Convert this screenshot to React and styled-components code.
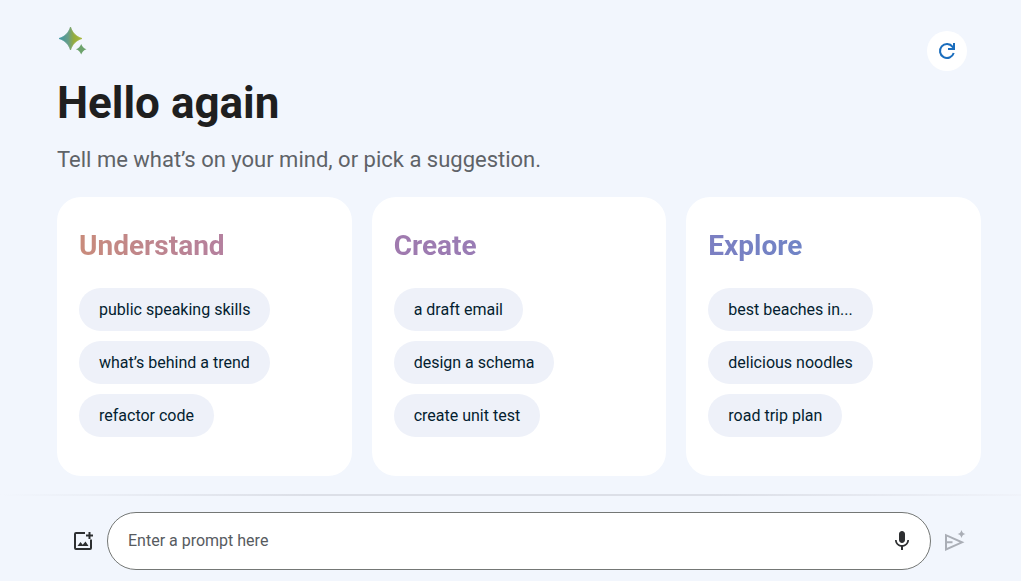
import React from 'react';
import styled, { createGlobalStyle } from 'styled-components';
import { MdMic } from 'react-icons/md';

const GlobalStyle = createGlobalStyle`
  * {
    box-sizing: border-box;
  }

  body {
    margin: 0;
    background: #f2f6fd;
    font-family: Roboto, "Liberation Sans", sans-serif;
  }
`;

const Page = styled.div`
  min-height: 100vh;
  display: flex;
  flex-direction: column;
`;

const Main = styled.main`
  flex: 1;
  padding: 27px 40px 18px 57px;
`;

const Header = styled.header`
  display: flex;
  justify-content: space-between;
  align-items: flex-start;
  padding: 0 14px 0 2px;
`;

const RefreshButton = styled.button`
  display: flex;
  align-items: center;
  justify-content: center;
  width: 40px;
  height: 40px;
  margin-top: 4px;
  padding: 0;
  border: none;
  border-radius: 50%;
  background: #ffffff;
  color: #1a6dbd;
  cursor: pointer;
`;

const Title = styled.h1`
  margin: 6px 0 0;
  font-weight: 700;
  font-size: 44px;
  line-height: 52px;
  color: #1f1f1f;
`;

const Subtitle = styled.p`
  margin: 17px 0 0;
  font-size: 22px;
  line-height: 28px;
  color: #5f6368;
`;

const Cards = styled.div`
  display: grid;
  grid-template-columns: repeat(3, 1fr);
  gap: 20px;
  margin-top: 23px;
`;

const Card = styled.section`
  padding: 33px 22px 39px;
  border-radius: 24px;
  background: #ffffff;
`;

const CardTitle = styled.h2`
  width: fit-content;
  margin: 0 0 26px;
  font-weight: 700;
  font-size: 28px;
  line-height: 32px;
  color: transparent;
  background: linear-gradient(
    90deg,
    ${({ $from }) => $from},
    ${({ $to }) => $to}
  );
  background-clip: text;
`;

const Chips = styled.div`
  display: flex;
  flex-direction: column;
  align-items: flex-start;
  gap: 10px;
`;

const Chip = styled.button`
  height: 43px;
  padding: 0 20px;
  border: none;
  border-radius: 22px;
  background: #eef1f9;
  color: #041e30;
  font-family: inherit;
  font-size: 16px;
  cursor: pointer;
`;

const Divider = styled.hr`
  width: 100%;
  height: 2px;
  margin: 0;
  border: none;
  background: linear-gradient(
    90deg,
    #f2f6fd 0%,
    #dcdfe7 30%,
    #dcdfe7 70%,
    #f0f3fa 100%
  );
`;

const PromptBar = styled.form`
  display: flex;
  align-items: center;
  gap: 12px;
  padding: 16px 54px 11px 71px;
`;

const IconButton = styled.button`
  display: flex;
  flex-shrink: 0;
  padding: 0;
  border: none;
  background: none;
  color: ${({ $muted }) => ($muted ? '#aaaeb6' : '#2d2f31')};
  cursor: pointer;
`;

const PromptField = styled.div`
  flex: 1;
  display: flex;
  align-items: center;
  height: 58px;
  padding: 0 16px 0 20px;
  border: 1px solid #747775;
  border-radius: 29px;
  background: #ffffff;
`;

const PromptInput = styled.input`
  flex: 1;
  min-width: 0;
  padding: 0;
  border: none;
  outline: none;
  background: transparent;
  font-family: inherit;
  font-size: 16px;
  line-height: 20px;
  color: #1f1f1f;

  &::placeholder {
    color: #575b5f;
    opacity: 1;
  }
`;

const SparkLogo = () => (
  <svg width="28" height="28" viewBox="0 0 28 28" aria-hidden="true">
    <defs>
      <linearGradient id="spark" x1="0" y1="0" x2="1" y2="0">
        <stop offset="0" stopColor="#3c96a4" />
        <stop offset="0.4" stopColor="#689e88" />
        <stop offset="0.65" stopColor="#96ac3c" />
        <stop offset="1" stopColor="#a8b83c" />
      </linearGradient>
    </defs>
    <path
      d="M11.5 0C13.5 6 17 9.500 23 11.5 17 13.500 13.500 17 11.5 23 9.500 17 6 13.500 0 11.5 6 9.500 9.500 6 11.5 0Z"
      fill="url(#spark)"
      stroke="url(#spark)"
      strokeWidth="0.8"
      strokeLinejoin="round"
    />
    <path
      d="M22.2 17C23.2 19.800 24.700 21.300 27.500 22.300 24.700 23.300 23.200 24.800 22.200 27.600 21.200 24.800 19.700 23.300 16.900 22.300 19.700 21.300 21.200 19.800 22.200 17Z"
      fill="#6da36c"
    />
  </svg>
);

const RefreshIcon = () => (
  <svg
    width="24"
    height="24"
    viewBox="0 0 24 24"
    fill="none"
    stroke="currentColor"
    strokeWidth="2"
    aria-hidden="true"
  >
    <path d="M18.7 14A7 7 0 1 1 17.6 7.8L19 10" />
    <path d="M19 4V10H13" />
  </svg>
);

const AddImageIcon = () => (
  <svg width="24" height="24" viewBox="0 0 24 24" aria-hidden="true">
    <path
      d="M14 4H5a1 1 0 0 0-1 1v14a1 1 0 0 0 1 1h14a1 1 0 0 0 1-1v-8.500"
      fill="none"
      stroke="currentColor"
      strokeWidth="2"
    />
    <path d="M17.500 3h2v2.500h2.500v2h-2.500V10h-2V7.500h-2.500v-2h2.500Z" fill="currentColor" />
    <path d="M6.500 17 9.500 13 11.700 15.800 14.500 12.500 17.500 17Z" fill="currentColor" />
  </svg>
);

const SendIcon = () => (
  <svg width="24" height="24" viewBox="0 0 24 24" aria-hidden="true">
    <path
      d="M3 6.200V20.500L19 13.300ZM3 13.300H9.500"
      fill="none"
      stroke="currentColor"
      strokeWidth="2"
    />
    <path
      d="M18.500 1C19.200 3.400 20.100 4.300 22.500 5 20.100 5.700 19.200 6.600 18.500 9 17.800 6.600 16.900 5.700 14.500 5 16.900 4.300 17.800 3.400 18.500 1Z"
      fill="currentColor"
    />
  </svg>
);

const groups = [
  {
    title: 'Understand',
    from: '#c98b7b',
    to: '#b4809f',
    items: ['public speaking skills', 'what’s behind a trend', 'refactor code'],
  },
  {
    title: 'Create',
    from: '#a07aae',
    to: '#997cb5',
    items: ['a draft email', 'design a schema', 'create unit test'],
  },
  {
    title: 'Explore',
    from: '#7c7fc2',
    to: '#7084c6',
    items: ['best beaches in...', 'delicious noodles', 'road trip plan'],
  },
];

const App = () => {
  return (
    <Page>
      <GlobalStyle />
      <Main>
        <Header>
          <SparkLogo />
          <RefreshButton type="button" aria-label="Refresh suggestions">
            <RefreshIcon />
          </RefreshButton>
        </Header>
        <Title>Hello again</Title>
        <Subtitle>Tell me what’s on your mind, or pick a suggestion.</Subtitle>
        <Cards>
          {groups.map(({ title, from, to, items }) => (
            <Card key={title}>
              <CardTitle $from={from} $to={to}>
                {title}
              </CardTitle>
              <Chips>
                {items.map((item) => (
                  <Chip key={item} type="button">
                    {item}
                  </Chip>
                ))}
              </Chips>
            </Card>
          ))}
        </Cards>
      </Main>
      <Divider />
      <PromptBar onSubmit={(e) => e.preventDefault()}>
        <IconButton type="button" aria-label="Add image">
          <AddImageIcon />
        </IconButton>
        <PromptField>
          <PromptInput
            type="text"
            aria-label="Prompt"
            placeholder="Enter a prompt here"
          />
          <IconButton type="button" aria-label="Use microphone">
            <MdMic size={24} />
          </IconButton>
        </PromptField>
        <IconButton type="submit" aria-label="Send" $muted>
          <SendIcon />
        </IconButton>
      </PromptBar>
    </Page>
  );
};

export default App;
